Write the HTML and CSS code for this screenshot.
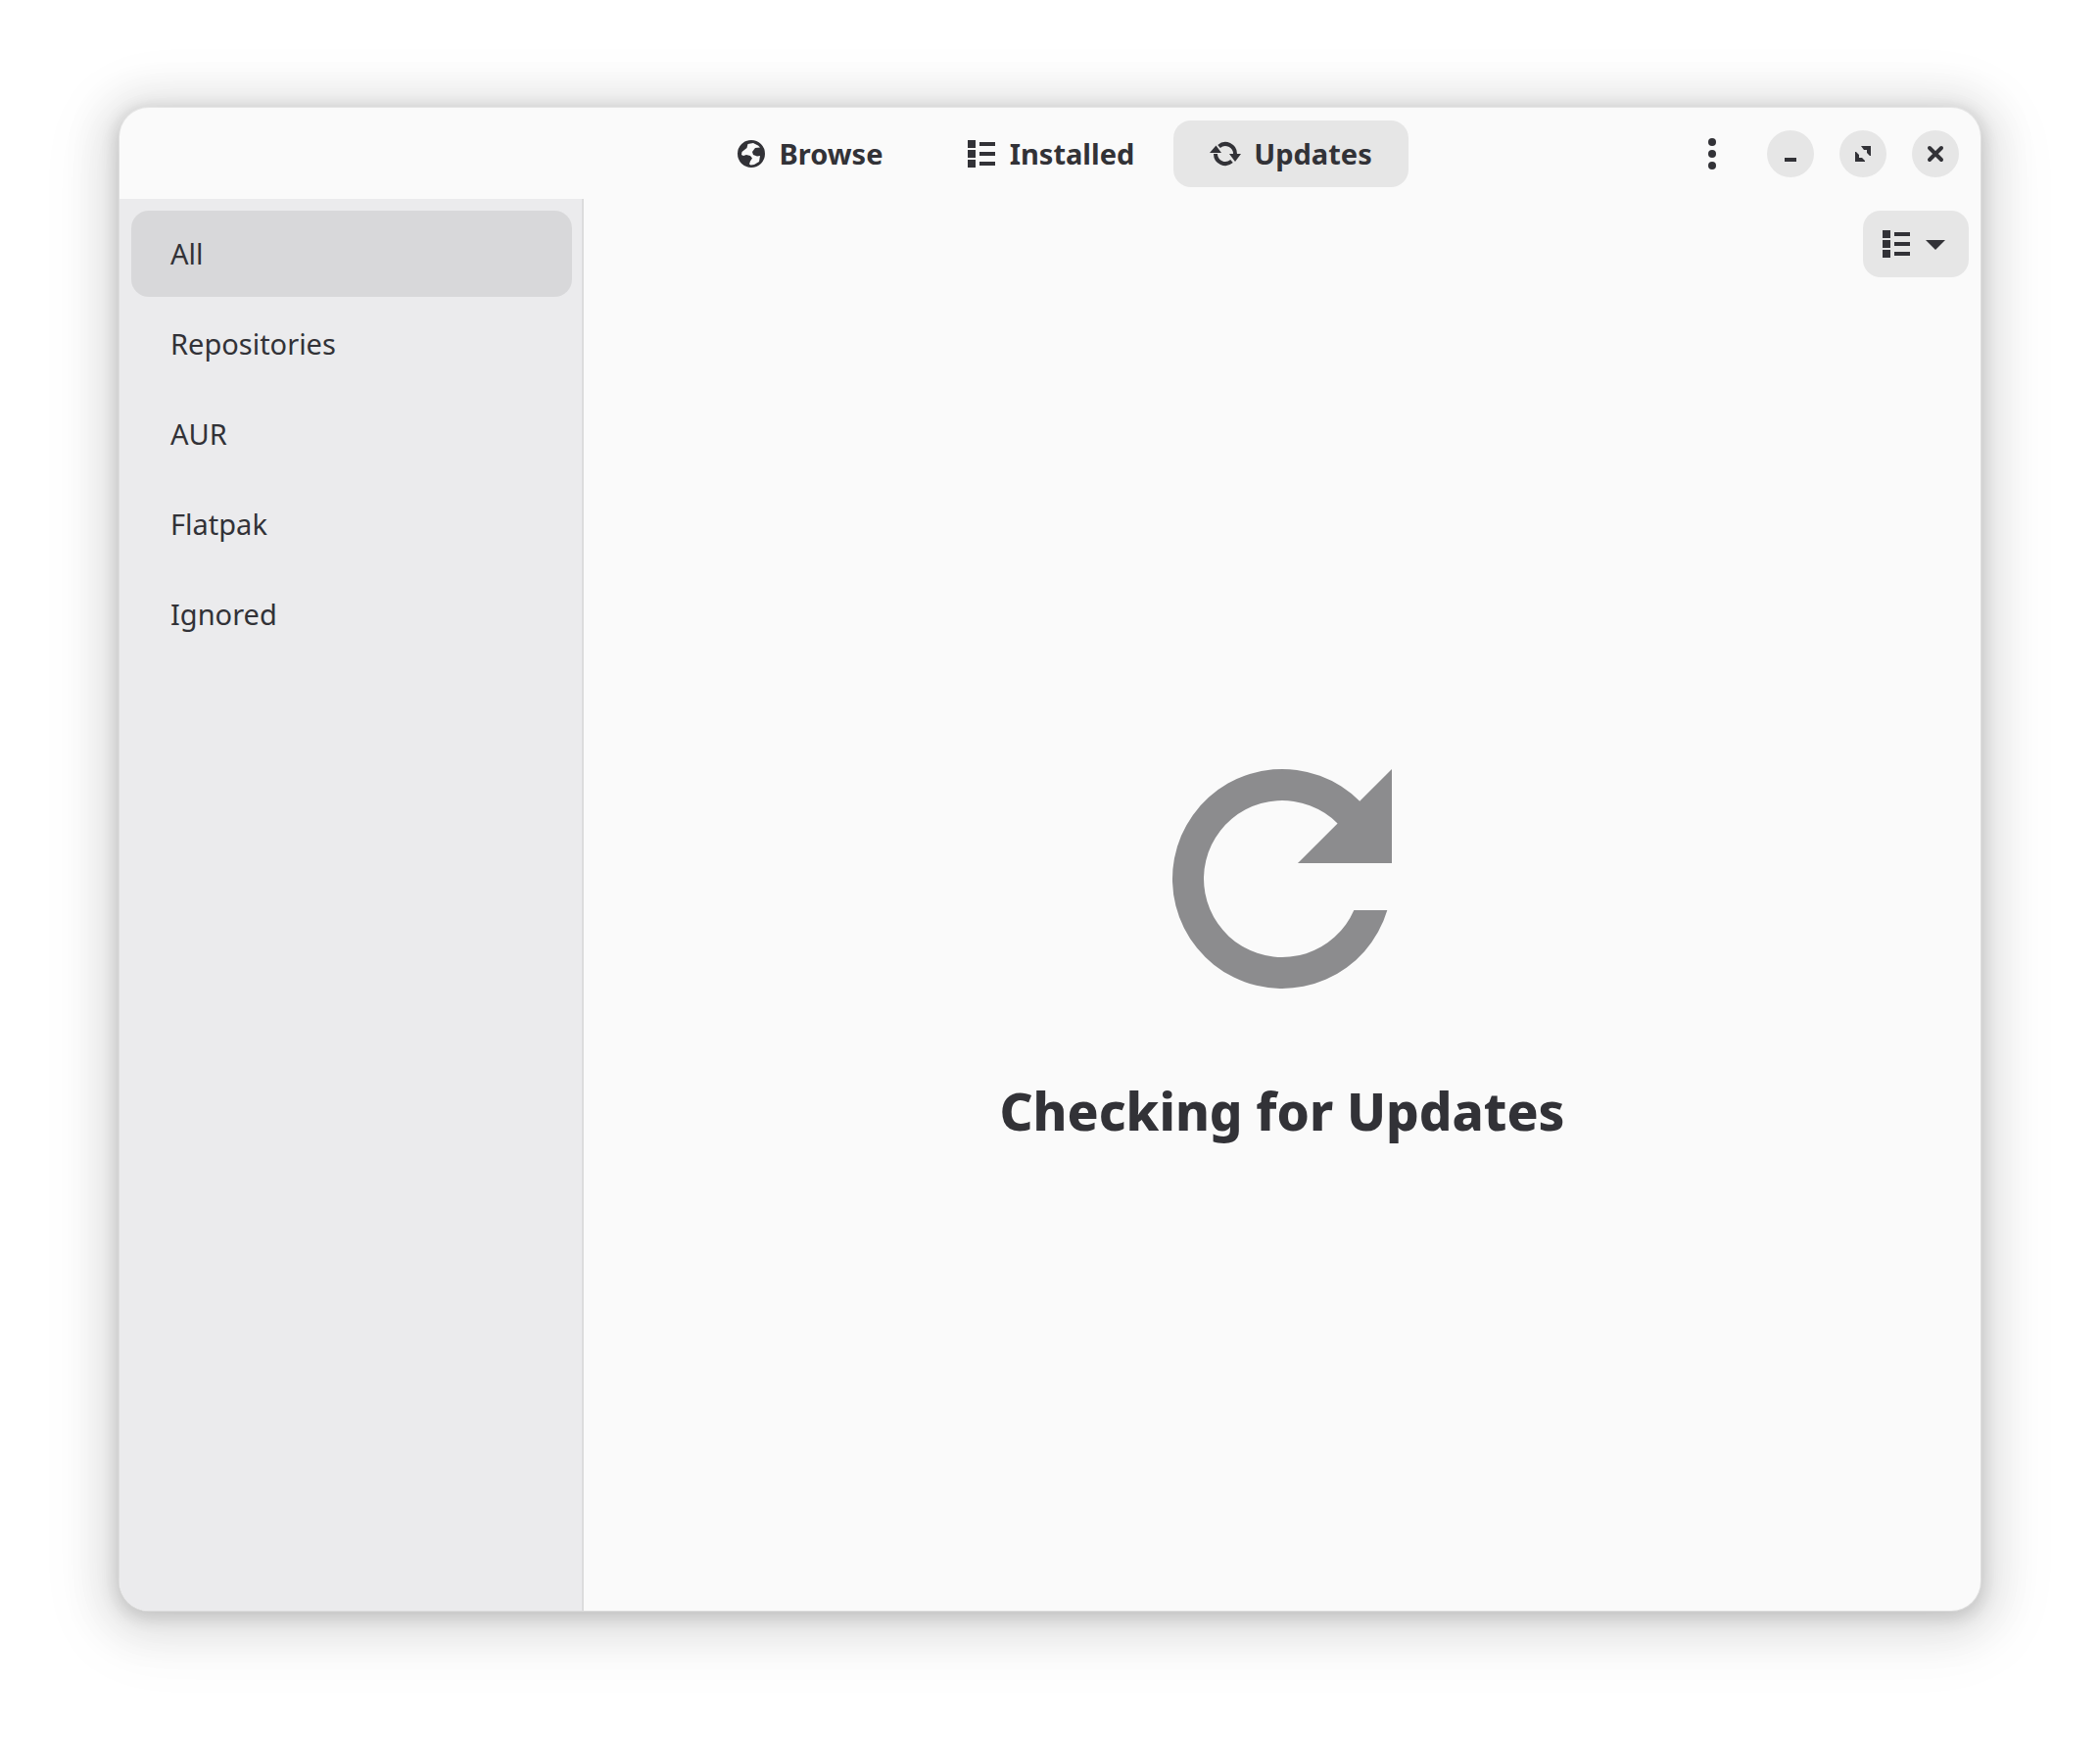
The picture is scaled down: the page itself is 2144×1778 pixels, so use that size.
FILE: index.html
```html
<!DOCTYPE html>
<html lang="en">
<head>
<meta charset="utf-8">
<title>Updates</title>
<link rel="stylesheet" href="styles.css">
</head>
<body>
<svg class="sprite" aria-hidden="true">
  <symbol id="icon-list" viewBox="0 0 32 32">
    <path d="M2 2h8v8H2zM2 12h8v8H2zM2 22h8v8H2zM14 4h16v4H14zM14 14h16v4H14zM14 24h16v4H14z"/>
  </symbol>
</svg>
<div class="window">
  <header class="header">
    <nav class="tabs">
      <button class="tab" type="button">
        <svg class="icon" viewBox="0 0 32 32" aria-hidden="true"><path fill-rule="evenodd" d="M16 2a14 14 0 1 0 0 28a14 14 0 1 0 0-28zM12.500 6L18 5l5 2.500 2 2-5 .5-3 4 1 3 4 1.500 3-.5-1 6-5 3-3.500.5-1.500-1 1-3 2-3-2-2.500-4-1-3 1-2-1 .5-3 5-4z"/></svg>
        <span>Browse</span>
      </button>
      <button class="tab" type="button">
        <svg class="icon" aria-hidden="true"><use href="#icon-list"/></svg>
        <span>Installed</span>
      </button>
      <button class="tab tab-active" type="button" aria-current="page">
        <svg class="icon" viewBox="0 0 32 32" aria-hidden="true">
          <path class="stroke" d="M9.500 8.400A10 10 0 0 1 26 16M22.500 23.600A10 10 0 0 1 6 16"/>
          <path d="M0 15L6.500 7.500L12 15zM20 16h12l-6 8z"/>
        </svg>
        <span>Updates</span>
      </button>
    </nav>
    <div class="controls">
      <button class="menu" type="button" aria-label="Main menu">
        <svg class="icon" viewBox="0 0 32 32" aria-hidden="true"><circle cx="16" cy="4" r="4"/><circle cx="16" cy="16" r="4"/><circle cx="16" cy="28" r="4"/></svg>
      </button>
      <button class="control" type="button" aria-label="Minimize">
        <svg class="icon" viewBox="0 0 32 32" aria-hidden="true"><path d="M10 20h12v4H10z"/></svg>
      </button>
      <button class="control" type="button" aria-label="Maximize">
        <svg class="icon" viewBox="0 0 32 32" aria-hidden="true"><path d="M14 8h10v10h-1l-3-3v-3h-3zM8 14h1l3 3v3h3l3 3v1H8z"/></svg>
      </button>
      <button class="control" type="button" aria-label="Close">
        <svg class="icon" viewBox="0 0 32 32" aria-hidden="true"><path class="cross" d="M10 10l12 12M22 10L10 22"/></svg>
      </button>
    </div>
  </header>
  <div class="body">
    <aside class="sidebar">
      <button class="row row-active" type="button" aria-current="true">All</button>
      <button class="row" type="button">Repositories</button>
      <button class="row" type="button">AUR</button>
      <button class="row" type="button">Flatpak</button>
      <button class="row" type="button">Ignored</button>
    </aside>
    <main class="content">
      <div class="toolbar">
        <button class="sort" type="button" aria-label="Sort order">
          <svg class="icon" aria-hidden="true"><use href="#icon-list"/></svg>
          <svg class="icon" viewBox="0 0 32 32" aria-hidden="true"><path d="M6 12h20L16 22z"/></svg>
        </button>
      </div>
      <section class="status">
        <svg class="status-icon" viewBox="0 0 16 16" aria-hidden="true"><path d="M12.950 3.050L15 1V7H9L11.536 4.464A5 5 0 1 0 12.583 10H14.708A7 7 0 1 1 12.950 3.050Z"/></svg>
        <h1 class="status-title">Checking for Updates</h1>
      </section>
    </main>
  </div>
</div>
</body>
</html>
```
FILE: styles.css
```css
* {
  box-sizing: border-box;
}

body {
  display: flex;
  min-height: 100vh;
  margin: 0;
  padding: 110px 122px 134px;
  background: #fff;
  color: #323237;
  font-family: "Noto Sans", sans-serif;
  font-size: 29px;
  line-height: 40px;
}

button {
  border: 0;
  padding: 0;
  background: none;
  color: inherit;
  font: inherit;
}

.sprite {
  display: none;
}

.icon {
  flex: none;
  display: block;
  width: 32px;
  height: 32px;
  fill: currentColor;
}

.stroke {
  fill: none;
  stroke: currentColor;
  stroke-width: 4px;
}

.cross {
  fill: none;
  stroke: currentColor;
  stroke-width: 4px;
  stroke-linecap: round;
}

.window {
  flex: 1;
  display: flex;
  flex-direction: column;
  overflow: hidden;
  border-radius: 30px;
  background: #fafafa;
  box-shadow:
    0 0 0 1px rgba(255, 255, 255, 0.3),
    0 4px 16px 4px rgba(0, 0, 0, 0.13),
    0 6px 40px 20px rgba(0, 0, 0, 0.09),
    0 12px 64px 32px rgba(0, 0, 0, 0.04);
}

.header {
  display: grid;
  grid-template-columns: 1fr auto 1fr;
  align-items: center;
  height: 93px;
  padding: 0 22px;
}

.tabs {
  grid-column: 2;
  display: grid;
  grid-template-columns: repeat(3, 240px);
  gap: 6px;
}

.tab {
  display: flex;
  align-items: center;
  justify-content: center;
  gap: 13px;
  height: 68px;
  border-radius: 18px;
  font-weight: 700;
}

.tab-active,
.control,
.sort {
  background: #e6e6e6;
}

.controls {
  display: flex;
  align-items: center;
  justify-content: flex-end;
  gap: 26px;
}

.menu {
  display: grid;
  place-items: center;
  width: 60px;
  height: 68px;
}

.control {
  display: grid;
  place-items: center;
  width: 48px;
  height: 48px;
  border-radius: 50%;
}

.body {
  flex: 1;
  display: flex;
}

.sidebar {
  flex: none;
  display: flex;
  flex-direction: column;
  gap: 4px;
  width: 474px;
  padding: 12px 10px 12px 12px;
  border-right: 2px solid #dcdcdd;
  background: #ebebed;
}

.row {
  height: 88px;
  padding: 0 40px;
  border-radius: 18px;
  text-align: left;
}

.row-active {
  background: #d8d8da;
}

.content {
  flex: 1;
  display: flex;
  flex-direction: column;
}

.toolbar {
  display: flex;
  justify-content: flex-end;
  padding: 12px;
}

.sort {
  display: flex;
  align-items: center;
  justify-content: center;
  gap: 8px;
  width: 108px;
  height: 68px;
  border-radius: 18px;
}

.status {
  flex: 1;
  display: flex;
  flex-direction: column;
  align-items: center;
  justify-content: center;
  gap: 72px;
}

.status-icon {
  width: 256px;
  height: 256px;
  fill: #8c8c8e;
}

.status-title {
  margin: 0;
  font-size: 53px;
  font-weight: 800;
  line-height: 74px;
}
```
